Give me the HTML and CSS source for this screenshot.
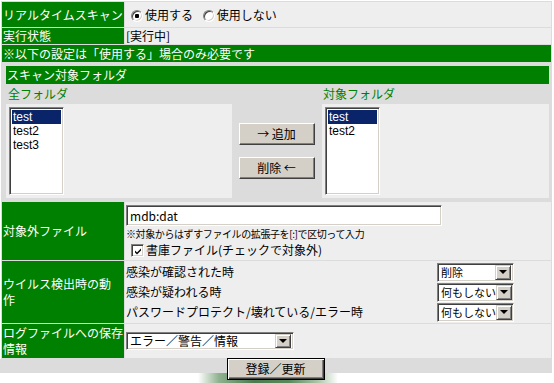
FILE: index.html
```html
<!DOCTYPE html>
<html lang="ja">
<head>
    <meta charset="UTF-8">
    <title>リアルタイムスキャン設定</title>
    <link rel="stylesheet" href="styles.css">
</head>
<body>
<table class="conf">
    <tr class="r-scan">
        <th>リアルタイムスキャン</th>
        <td>
            <label><input type="radio" name="rt" checked>使用する</label>
            <label><input type="radio" name="rt">使用しない</label>
        </td>
    </tr>
    <tr class="r-state">
        <th>実行状態</th>
        <td>[実行中]</td>
    </tr>
    <tr class="r-note">
        <td colspan="2" class="bar">※以下の設定は「使用する」場合のみ必要です</td>
    </tr>
    <tr>
        <td colspan="2" class="folders">
            <div class="bar sub">スキャン対象フォルダ</div>
            <div class="pick">
                <div class="cap cap-l">全フォルダ</div>
                <div class="cap cap-r">対象フォルダ</div>
                <div class="box box-l">
                    <div class="list">
                        <div class="on">test</div>
                        <div>test2</div>
                        <div>test3</div>
                    </div>
                </div>
                <div class="mid">
                    <button class="btn">→ 追加</button>
                    <button class="btn">削除 ←</button>
                </div>
                <div class="box box-r">
                    <div class="list">
                        <div class="on">test</div>
                        <div>test2</div>
                    </div>
                </div>
            </div>
        </td>
    </tr>
    <tr class="r-ext">
        <th>対象外ファイル</th>
        <td>
            <input type="text" class="txt" value="mdb:dat">
            <p class="hint">※対象からはずすファイルの拡張子を[:]で区切って入力</p>
            <label class="chk"><input type="checkbox" checked>書庫ファイル(チェックで対象外)</label>
        </td>
    </tr>
    <tr class="r-virus">
        <th class="two">ウイルス検出時の動<br>作</th>
        <td>
            <div class="acts">
                <span>感染が確認された時</span>
                <span class="sel"><span>削除</span><i></i></span>
                <span>感染が疑われる時</span>
                <span class="sel"><span>何もしない</span><i></i></span>
                <span>パスワードプロテクト/壊れている/エラー時</span>
                <span class="sel"><span>何もしない</span><i></i></span>
            </div>
        </td>
    </tr>
    <tr class="r-log">
        <th class="two">ログファイルへの保存<br>情報</th>
        <td><span class="sel sel-log"><span>エラー／警告／情報</span><i></i></span></td>
    </tr>
</table>
<div class="foot">
    <button class="btn btn-main">登録／更新</button>
</div>
<div class="deco"></div>
</body>
</html>
```

FILE: styles.css
```css
* {
    margin: 0;
    padding: 0;
    box-sizing: border-box;
}

body {
    background: #fff;
    font-family: "Noto Sans CJK JP", "Liberation Sans", sans-serif;
    font-size: 12px;
    line-height: 14px;
    color: #000;
}

.conf {
    width: 550px;
    margin: 1px 0 0 1px;
    border-spacing: 1px;
    background: #dcdcdc;
}

.conf th {
    width: 121px;
    padding: 0 1px;
    background: #008000;
    color: #fff;
    font-weight: normal;
    text-align: left;
    white-space: nowrap;
}

.conf th.two {
    line-height: 16px;
}

.conf td {
    padding: 0 1px;
    background: #eee;
}

.r-scan th, .r-scan td {
    height: 25px;
}

.r-scan label {
    margin-left: 5px;
    margin-right: 2px;
}

.r-state th, .r-state td {
    height: 16px;
}

.conf td.bar, .bar {
    background: #008000;
    color: #fff;
    height: 17px;
}

.conf td.folders {
    background: #dcdcdc;
    padding: 3px 2px 3px 4px;
}

.bar.sub {
    height: 18px;
    padding-left: 1px;
    line-height: 18px;
}

.pick {
    display: grid;
    grid-template-columns: 226px 90px 227px;
    grid-template-rows: 20px 94px;
    grid-template-areas:
        "capl . capr"
        "boxl mid boxr";
}

.cap {
    color: #008000;
    padding-left: 2px;
    line-height: 20px;
}

.cap-l { grid-area: capl; }
.cap-r { grid-area: capr; padding-left: 1px; }

.box {
    background: #eee;
    padding: 3px;
}

.box-l { grid-area: boxl; }
.box-r { grid-area: boxr; }

.list {
    width: 55px;
    height: 88px;
    background: #fff;
    border: 1px solid;
    border-color: #808080 #fff #fff #808080;
    box-shadow: inset 1px 1px #404040, inset -1px -1px #d4d0c8;
    padding: 2px 2px;
    font-family: "Liberation Sans", sans-serif;
    font-size: 12px;
}

.list div {
    height: 14px;
    line-height: 14px;
    padding-left: 1px;
}

.list .on {
    background: #0a246a;
    color: #fff;
}

.mid {
    grid-area: mid;
    display: flex;
    flex-direction: column;
    align-items: center;
    gap: 12px;
    padding-top: 19px;
    padding-right: 1px;
}

.btn {
    width: 76px;
    height: 22px;
    font: inherit;
    color: #000;
    background: #d4d0c8;
    border: 1px solid;
    border-color: #fff #404040 #404040 #fff;
    box-shadow: inset -1px -1px #808080;
    cursor: pointer;
}

.r-ext td {
    padding: 3px 1px 3px 1px;
    vertical-align: top;
}

.r-ext th {
    height: 57px;
}

.txt {
    display: block;
    width: 316px;
    height: 21px;
    font: inherit;
    padding: 0 3px;
    background: #fff;
    border: 1px solid;
    border-color: #808080 #fff #fff #808080;
    box-shadow: inset 1px 1px #404040, inset -1px -1px #d4d0c8;
    outline: none;
}

.hint {
    font-size: 10px;
    line-height: 13px;
    margin-top: 1px;
    letter-spacing: -0.4px;
}

.chk {
    display: flex;
    align-items: center;
    margin-left: 5px;
    margin-top: 3px;
    height: 14px;
}

input[type=radio], input[type=checkbox] {
    appearance: none;
    -webkit-appearance: none;
    vertical-align: -2px;
    margin-right: 2px;
    background: #fff;
    border: 1px solid;
    border-color: #808080 #fff #fff #808080;
    box-shadow: inset 1px 1px #404040, inset -1px -1px #d4d0c8;
}

input[type=radio] {
    width: 12px;
    height: 12px;
    border-radius: 50%;
}

input[type=radio]:checked {
    background: radial-gradient(circle, #000 0 2px, #fff 2.5px);
}

input[type=checkbox] {
    width: 13px;
    height: 13px;
}

input[type=checkbox]:checked {
    background: #fff url("data:image/svg+xml,%3Csvg xmlns='http://www.w3.org/2000/svg' width='13' height='13'%3E%3Cpath d='M3 5.5l2 2 4-4v2l-4 4-2-2z' fill='%23000'/%3E%3C/svg%3E") no-repeat;
}

.r-virus th {
    height: 60px;
}

.acts {
    display: grid;
    grid-template-columns: 311px 77px;
    grid-auto-rows: 20px;
    align-items: center;
    padding: 1px 0;
}

.sel {
    display: inline-flex;
    align-items: center;
    justify-content: space-between;
    width: 77px;
    height: 19px;
    background: #fff;
    border: 1px solid;
    border-color: #808080 #fff #fff #808080;
    box-shadow: inset 1px 1px #404040, inset -1px -1px #d4d0c8;
    padding: 1px 2px 1px 3px;
    white-space: nowrap;
}

.sel span {
    font-size: 11px;
    line-height: 14px;
}

.sel i {
    flex: none;
    width: 16px;
    height: 15px;
    background: #d4d0c8;
    border: 1px solid;
    border-color: #d4d0c8 #404040 #404040 #d4d0c8;
    box-shadow: inset 1px 1px #fff, inset -1px -1px #808080;
    display: flex;
    align-items: center;
    justify-content: center;
}

.sel i::after {
    content: "";
    border-left: 4px solid transparent;
    border-right: 4px solid transparent;
    border-top: 4px solid #000;
}

.r-log th {
    height: 34px;
}

.sel-log {
    width: 168px;
    height: 18px;
    vertical-align: middle;
}

.sel-log span {
    font-size: 12px;
}

.sel-log i {
    height: 14px;
}

.foot {
    width: 552px;
    height: 14px;
    background: #dcdcdc;
    text-align: center;
}

.btn-main {
    width: 98px;
    height: 22px;
    margin-left: -1px;
    margin-top: -1px;
    border: 1px solid #000;
    box-shadow: inset 1px 1px #fff, inset -1px -1px #404040, inset -2px -2px #808080;
}

.deco {
    width: 140px;
    height: 13px;
    margin-left: 198px;
    background: linear-gradient(to right, #fff, #8fb18f 15%, #4b7b4f 40%, #5a8a5c 65%, #a9c4a6 85%, #fff);
}
```
